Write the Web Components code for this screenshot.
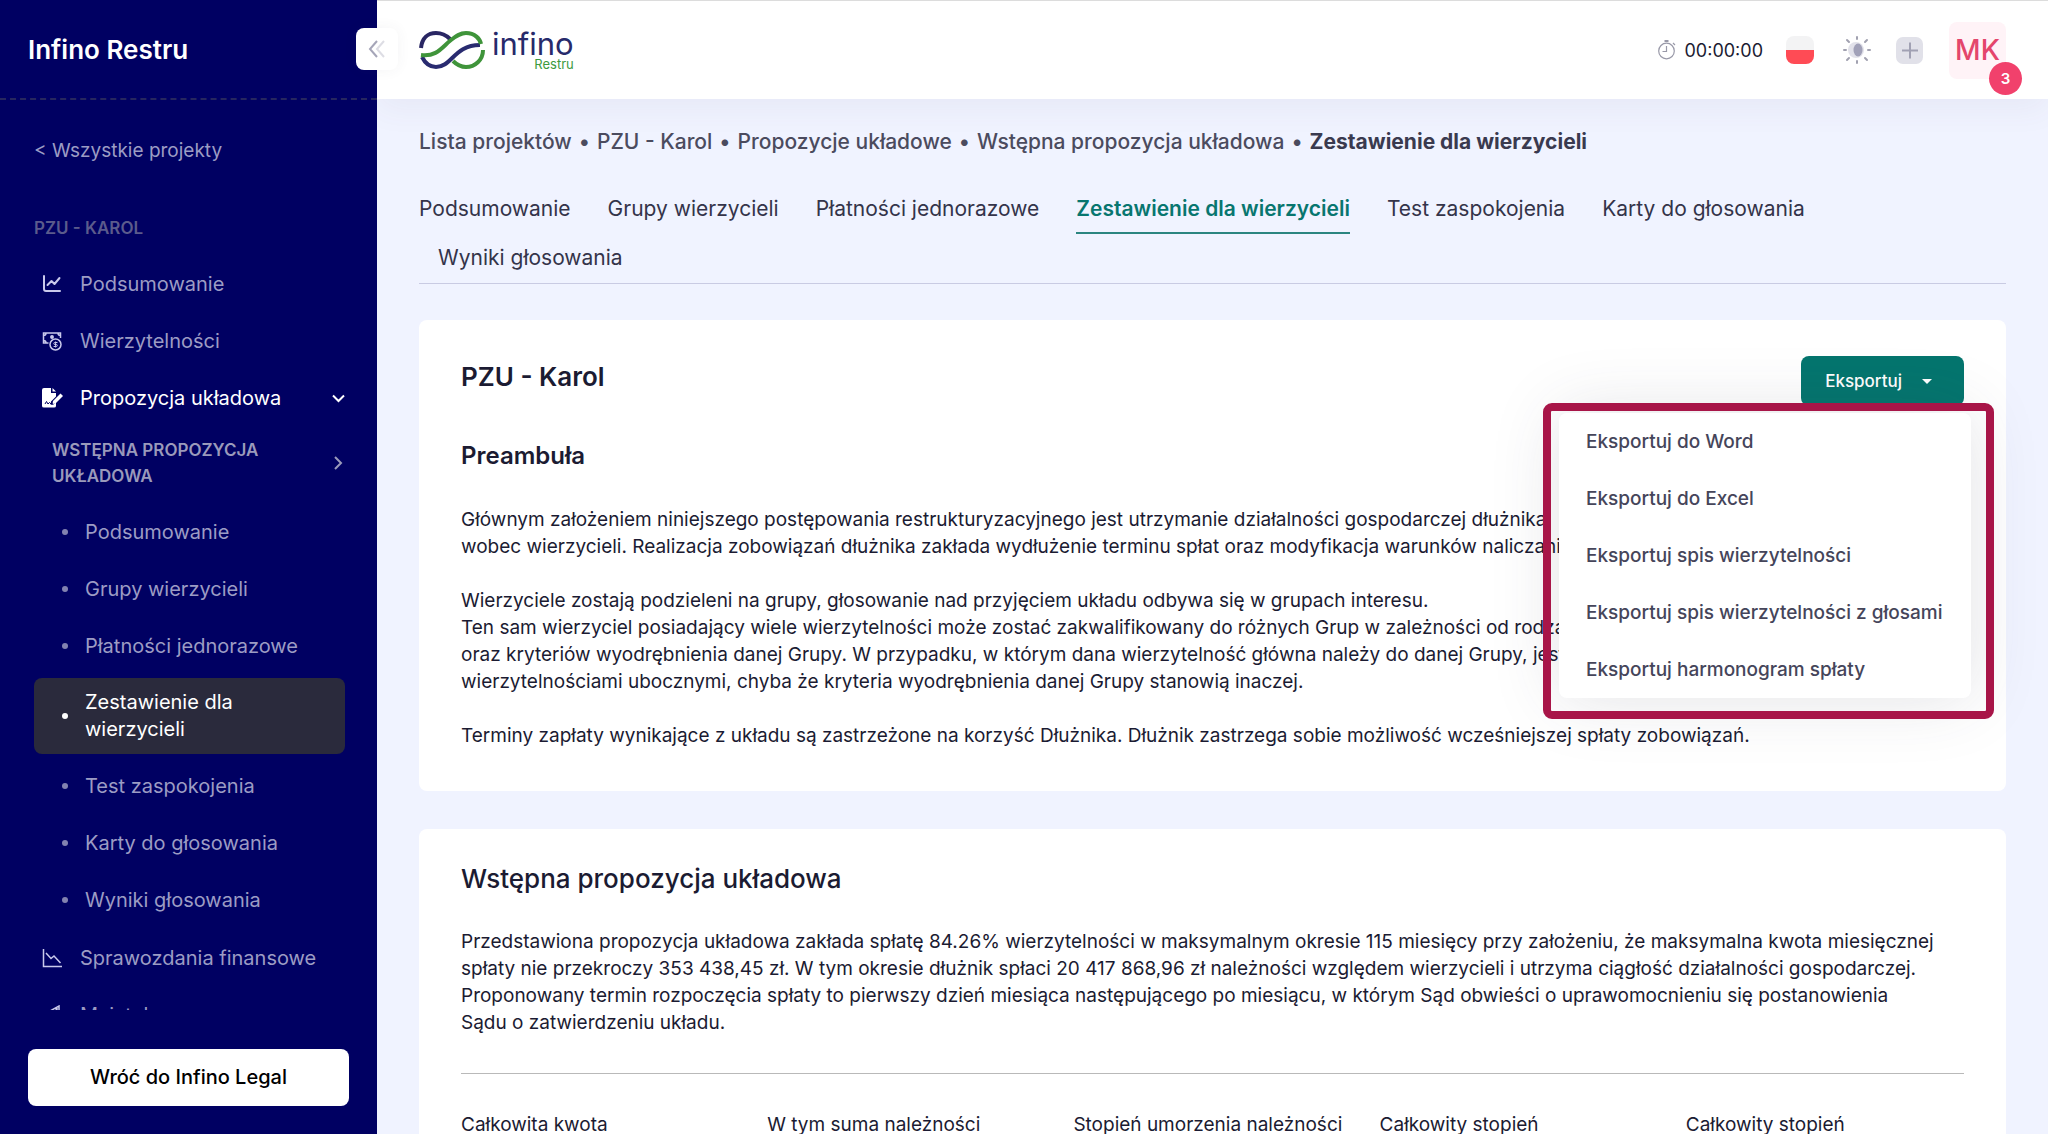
<!DOCTYPE html>
<html lang="pl">
<head>
<meta charset="utf-8">
<title>Infino Restru</title>
<style>
  body {
    margin: 0;
    font-family: Inter, 'Noto Sans', sans-serif;
    font-size: 19px;
    line-height: 27px;
    color: #1b1b32;
    background: #f0f3ff;
  }
</style>
</head>
<body>
<restru-app></restru-app>

<template id="side-link">
  <style>
    :host { display: block; }
    a {
      display: flex;
      align-items: center;
      min-height: 50px;
      box-sizing: border-box;
      padding: 11px 0 11px 8px;
      border-radius: 8px;
      color: #9c9cc4;
      font-size: 20px;
      text-decoration: none;
    }
    .icon { width: 38px; display: flex; flex: none; color: #c9c9ec; }
    .label { flex: 1; }
    :host([open]) a, :host([open]) .icon { color: #fff; }
    :host([sub]) .icon { width: 43px; color: #8282b0; }
    :host([sub]) .icon::before {
      content: '';
      width: 6px;
      height: 6px;
      margin-left: 20px;
      border-radius: 50%;
      background: currentColor;
    }
    :host([active]) a { background: #2a2a3c; color: #fff; padding-right: 80px; }
    :host([active]) .icon { color: #fff; }
  </style>
  <a href="#"><span class="icon"><slot name="icon"></slot></span><span class="label"><slot></slot></span><slot name="arrow"></slot></a>
</template>

<template id="side-bar">
  <style>
    :host {
      display: flex;
      flex-direction: column;
      width: 377px;
      height: 100vh;
      flex: none;
      position: relative;
      background: #000062;
      color: #9c9cc4;
      z-index: 2;
    }
    header {
      display: flex;
      align-items: center;
      height: 100px;
      padding: 0 28px;
      border-bottom: 2px dashed #26265f;
      box-sizing: border-box;
    }
    h1 { margin: 0; font-size: 26px; font-weight: 600; color: #fff; }
    .toggle {
      position: absolute;
      left: 356px;
      top: 28px;
      width: 42px;
      height: 42px;
      padding: 0;
      border: 0;
      border-radius: 8px;
      background: #fff;
      box-shadow: 0 0 14px rgba(60, 60, 90, .06);
      display: grid;
      place-items: center;
    }
    nav { flex: 1; min-height: 0; overflow: hidden; padding: 37px 32px 0 34px; margin-bottom: 39px; }
    .back { display: block; color: #9c9cc4; text-decoration: none; }
    h2 { margin: 51px 0 17px; font-size: 17px; font-weight: 600; color: #5b5b8c; text-transform: uppercase; }
    .links { display: flex; flex-direction: column; gap: 7px; }
    .links + .links { margin-top: 8px; }
    .group {
      display: flex;
      align-items: center;
      justify-content: space-between;
      padding: 14px 0 18px 18px;
      font-size: 17px;
      line-height: 26px;
      font-weight: 600;
      color: #9a9abb;
      text-transform: uppercase;
    }
    .group span { width: 240px; }
    .home { padding: 0 28px 28px; }
    .home button {
      width: 100%;
      height: 57px;
      border: 0;
      border-radius: 8px;
      background: #fff;
      color: #000;
      font: 500 20px/27px Inter, sans-serif;
    }
  </style>
  <header>
    <h1>Infino Restru</h1>
    <button class="toggle" aria-label="Zwiń menu">
      <svg width="18" height="20" viewBox="0 0 18 20" fill="none" stroke-width="2"><path d="M9 2 2 10l7 8" stroke="#a5a5b8"/><path d="M16 2 9 10l7 8" stroke="#dddde4"/></svg>
    </button>
  </header>
  <nav>
    <a class="back" href="#">&lt; Wszystkie projekty</a>
    <h2>PZU - Karol</h2>
    <div class="links">
      <side-link><svg slot="icon" width="20" height="20" viewBox="0 0 20 20" fill="none" stroke="currentColor" stroke-width="2" stroke-linecap="round" stroke-linejoin="round"><path d="M2 2v13q0 2 2 2h14M5.500 11l4-4 3 3 5-6"/></svg>Podsumowanie</side-link>
      <side-link><svg slot="icon" width="20" height="20" viewBox="0 0 20 20" fill="none" stroke="currentColor" stroke-width="1.500"><path d="M6.500 12H1.500V2h17v5M1.500 4.500Q4 4.500 4 2M16 2q0 2.500 2.500 2.500M1.500 9.500Q4 9.500 4 12"/><circle cx="13.500" cy="13.500" r="5.500"/><circle cx="10" cy="6" r="1.200" fill="currentColor"/><path d="M15.500 11.500h-2.700q-1 0-1 1t1 1h1.500q1 0 1 1t-1 1h-2.700M13.600 10.500v6" stroke-width="1"/></svg>Wierzytelności</side-link>
      <side-link open><svg slot="icon" width="22" height="20" viewBox="0 0 22 20" fill="currentColor"><path d="M2 0h7v5h5v3.500l-5 5-.5 3h3l2.500-2v3.500q0 1.500-2 1.500H2q-2 0-2-1.500V2q0-2 2-2z"/><path d="M10.500 0v3.500H14z"/><path d="m11 13 7.500-7.500 2.500 2.500-7.500 7.500-3 .5z"/><path d="m3 16 1.500-2.500L6 16l1.500-1.500L9 16h2" fill="none" stroke="#000062"/></svg>Propozycja układowa<svg slot="arrow" width="13" height="9" viewBox="0 0 13 9" fill="none" stroke="#fff" stroke-width="2"><path d="m1 1.500 5.500 5.500L12 1.500"/></svg></side-link>
    </div>
    <div class="group"><span>Wstępna propozycja układowa</span><svg width="13" height="14" viewBox="0 0 13 14" fill="none" stroke="currentColor" stroke-width="2"><path d="m3 1 6 6-6 6"/></svg></div>
    <div class="links">
      <side-link sub>Podsumowanie</side-link>
      <side-link sub>Grupy wierzycieli</side-link>
      <side-link sub>Płatności jednorazowe</side-link>
      <side-link sub active>Zestawienie dla wierzycieli</side-link>
      <side-link sub>Test zaspokojenia</side-link>
      <side-link sub>Karty do głosowania</side-link>
      <side-link sub>Wyniki głosowania</side-link>
    </div>
    <div class="links">
      <side-link><svg slot="icon" width="20" height="20" viewBox="0 0 20 20" fill="none" stroke="currentColor" stroke-width="1.500"><path d="M1.500 1v17.500H20M4 5l5 5.500L12 8l6.500 7"/></svg>Sprawozdania finansowe</side-link>
      <side-link><svg slot="icon" width="20" height="20" viewBox="0 0 20 20" fill="none" stroke="currentColor" stroke-width="1.500"><path d="M8 6l9-5v17M11 8l4-4v8z"/></svg>Majątek</side-link>
    </div>
  </nav>
  <div class="home"><button>Wróć do Infino Legal</button></div>
</template>

<template id="top-bar">
  <style>
    :host {
      display: flex;
      align-items: center;
      justify-content: space-between;
      height: 99px;
      box-sizing: border-box;
      padding: 0 42px;
      border-top: 1px solid #dcdcdc;
      background: #fff;
      box-shadow: 0 10px 30px rgba(82, 63, 105, .06);
    }
    .logo { display: flex; align-items: center; gap: 7px; }
    .name { display: grid; justify-items: end; color: #272a6b; font-size: 31px; line-height: 28px; }
    .name small { font-size: 13px; line-height: 12px; color: #3c9a3e; }
    .tools { display: flex; align-items: center; font-size: 18px; }
    .timer { display: flex; align-items: center; gap: 8px; margin-right: 23px; }
    .icon { display: flex; padding: 0; border: 0; background: none; }
    .flag { width: 28px; height: 28px; border-radius: 8px; background: linear-gradient(#f3f3f4 50%, #ff4b55 50%); margin-right: 29px; }
    .theme { margin-right: 25px; }
    .add { margin-right: 25px; }
    .user {
      position: relative;
      width: 57px;
      height: 57px;
      padding: 0;
      border: 0;
      border-radius: 8px;
      background: #fff3f7;
      color: #e4466c;
      font: 500 28px/57px Inter, sans-serif;
    }
    .badge {
      position: absolute;
      right: -16px;
      bottom: -16px;
      width: 33px;
      border-radius: 50%;
      background: #f1416c;
      color: #fff;
      font-size: 15px;
      font-weight: 600;
      line-height: 33px;
    }
  </style>
  <div class="logo">
    <svg width="66" height="38" viewBox="0 0 66 38" fill="none" stroke-width="4">
      <path d="M2 17C3 7 9 2 17 2c6 0 10 2 14 6" stroke="#292663"/>
      <path d="M3 26c3 6 8 10 14 10 16 0 18-22 44-22" stroke="#292b70"/>
      <path d="M2 24c16 2 21-8 30-15 5-4 9-7 15-7 9 0 14 6 15 11" stroke="#3f943a"/>
      <path d="M64 19c0 10-8 17-17 17-5 0-9-2-13-6" stroke="#3f943a"/>
    </svg>
    <div class="name">infino<small>Restru</small></div>
  </div>
  <div class="tools">
    <div class="timer">
      <svg width="18" height="20" viewBox="0 0 18 20" fill="none" stroke="#9999a8" stroke-width="1.200"><circle cx="8.500" cy="11" r="7.800"/><path d="M8.500 6v5.500H4.500M15 3l2 2"/><path d="M6.500 1h4" stroke-width="2"/></svg>
      <span>00:00:00</span>
    </div>
    <button class="icon flag" aria-label="Język"></button>
    <button class="icon theme" aria-label="Motyw">
      <svg width="28" height="28" viewBox="0 0 28 28"><circle cx="13" cy="14" r="8" fill="#e2e2ea"/><ellipse cx="15" cy="14" rx="4.500" ry="6.500" fill="#a1a1b8"/><path d="M14 1v2M14 25v2M1 14h2M25 14h2M4 4l2 2M22 22l2 2M4 24l2-2M22 6l2-2" stroke="#a1a1b0" stroke-width="2" stroke-linecap="round"/></svg>
    </button>
    <button class="icon add" aria-label="Dodaj">
      <svg width="28" height="28" viewBox="0 0 28 28"><rect width="27" height="27" y="1" rx="7" fill="#e1e1e9"/><path d="M6 14.500h16M14 6.500v16" stroke="#a1a1b3" stroke-width="2"/></svg>
    </button>
    <button class="user">MK<span class="badge">3</span></button>
  </div>
</template>

<template id="crumb-trail">
  <style>
    :host { display: block; font-size: 21px; font-weight: 500; color: #4b4b5e; }
    nav { display: flex; }
    a { color: inherit; text-decoration: none; white-space: nowrap; }
    a:not(:last-child)::after { content: '•'; margin: 0 7px; }
    a:last-child { font-weight: 700; color: #3a3a4f; }
  </style>
  <nav></nav>
</template>

<template id="tab-list">
  <style>
    :host { display: block; border-bottom: 1px solid #c9cbe3; }
    nav { display: flex; flex-wrap: wrap; }
    a {
      padding: 10px 0;
      margin-right: 37px;
      border-bottom: 2px solid transparent;
      color: #34344a;
      text-decoration: none;
      font-size: 21px;
    }
    a.active { color: #08766f; border-color: #2b8580; font-weight: 600; }
    a:last-child { margin-left: 19px; }
  </style>
  <nav></nav>
</template>

<template id="info-card">
  <style>
    :host { display: block; padding: 36px 42px 42px; border-radius: 8px; background: #fff; }
  </style>
  <slot></slot>
</template>

<template id="export-menu">
  <style>
    :host { display: block; position: relative; }
    .trigger {
      display: flex;
      align-items: center;
      gap: 20px;
      height: 50px;
      padding: 0 32px 0 24px;
      border: 0;
      border-radius: 8px;
      background: #04756e;
      color: #fff;
      font: 500 17px/27px Inter, sans-serif;
    }
    .trigger::after {
      content: '';
      border: 5px solid transparent;
      border-top-color: #fff;
      border-bottom: 0;
    }
    .frame {
      position: absolute;
      top: 47px;
      right: -30px;
      width: 451px;
      height: 316px;
      box-sizing: border-box;
      border: 8px solid #a81548;
      border-radius: 9px;
      z-index: 2;
      pointer-events: none;
    }
    .menu {
      position: absolute;
      top: 57px;
      right: -7px;
      width: 412px;
      box-sizing: border-box;
      padding: 0 27px;
      border-radius: 8px;
      background: #fff;
      box-shadow: 0 0 69px rgba(60, 60, 80, .15);
      z-index: 1;
    }
    .menu a {
      display: block;
      line-height: 57px;
      font-weight: 500;
      color: #45455a;
      text-decoration: none;
      white-space: nowrap;
    }
  </style>
  <button class="trigger" aria-haspopup="true">Eksportuj</button>
  <div class="menu">
    <a href="#">Eksportuj do Word</a>
    <a href="#">Eksportuj do Excel</a>
    <a href="#">Eksportuj spis wierzytelności</a>
    <a href="#">Eksportuj spis wierzytelności z głosami</a>
    <a href="#">Eksportuj harmonogram spłaty</a>
  </div>
  <div class="frame"></div>
</template>

<template id="restru-app">
  <style>
    :host { display: flex; height: 100vh; overflow: hidden; }
    .page { flex: 1; min-width: 0; }
    main { padding: 29px 42px 0; }
    tab-list { margin: 30px 0 36px; }
    .head { display: flex; justify-content: space-between; align-items: flex-start; height: 86px; }
    h2, h3 { margin: 0; line-height: 42px; font-size: 26px; font-weight: 600; }
    h3 { font-size: 24px; line-height: 28px; margin: 0 0 36px; }
    .plain { font-weight: 500; line-height: 28px; margin-bottom: 35px; }
    p { margin: 0 0 27px; white-space: nowrap; }
    p:last-of-type { margin-bottom: 0; }
    info-card + info-card { margin-top: 38px; }
    hr { margin: 37px 0; border: 0; border-top: 1px solid #b9b9b9; }
    .stats { display: grid; grid-template-columns: repeat(5, 1fr); margin-right: -28px; }
  </style>
  <side-bar></side-bar>
  <div class="page">
    <top-bar></top-bar>
    <main>
      <crumb-trail items="Lista projektów|PZU - Karol|Propozycje układowe|Wstępna propozycja układowa|Zestawienie dla wierzycieli"></crumb-trail>
      <tab-list active="3" items="Podsumowanie|Grupy wierzycieli|Płatności jednorazowe|Zestawienie dla wierzycieli|Test zaspokojenia|Karty do głosowania|Wyniki głosowania"></tab-list>
      <info-card>
        <div class="head"><h2>PZU - Karol</h2><export-menu></export-menu></div>
        <h3>Preambuła</h3>
        <p>Głównym założeniem niniejszego postępowania restrukturyzacyjnego jest utrzymanie działalności gospodarczej dłużnika<br>wobec wierzycieli. Realizacja zobowiązań dłużnika zakłada wydłużenie terminu spłat oraz modyfikacja warunków naliczania</p>
        <p>Wierzyciele zostają podzieleni na grupy, głosowanie nad przyjęciem układu odbywa się w grupach interesu.<br>Ten sam wierzyciel posiadający wiele wierzytelności może zostać zakwalifikowany do różnych Grup w zależności od rodzaju<br>oraz kryteriów wyodrębnienia danej Grupy. W przypadku, w którym dana wierzytelność główna należy do danej Grupy, jest<br>wierzytelnościami ubocznymi, chyba że kryteria wyodrębnienia danej Grupy stanowią inaczej.</p>
        <p>Terminy zapłaty wynikające z układu są zastrzeżone na korzyść Dłużnika. Dłużnik zastrzega sobie możliwość wcześniejszej spłaty zobowiązań.</p>
      </info-card>
      <info-card>
        <h2 class="plain">Wstępna propozycja układowa</h2>
        <p>Przedstawiona propozycja układowa zakłada spłatę 84.26% wierzytelności w maksymalnym okresie 115 miesięcy przy założeniu, że maksymalna kwota miesięcznej<br>spłaty nie przekroczy 353 438,45 zł. W tym okresie dłużnik spłaci 20 417 868,96 zł należności względem wierzycieli i utrzyma ciągłość działalności gospodarczej.<br>Proponowany termin rozpoczęcia spłaty to pierwszy dzień miesiąca następującego po miesiącu, w którym Sąd obwieści o uprawomocnieniu się postanowienia<br>Sądu o zatwierdzeniu układu.</p>
        <hr>
        <div class="stats">
          <span>Całkowita kwota</span><span>W tym suma należności</span><span>Stopień umorzenia należności</span><span>Całkowity stopień</span><span>Całkowity stopień</span>
        </div>
      </info-card>
    </main>
  </div>
</template>

<script>
class BaseElement extends HTMLElement {
    constructor() {
        super();
        const template = document.getElementById(this.localName);
        this.attachShadow({ mode: 'open' });
        this.shadowRoot.appendChild(template.content.cloneNode(true));
    }
}

// Renders the "items" attribute as a row of links
class LinkRow extends BaseElement {
    connectedCallback() {
        const nav = this.shadowRoot.querySelector('nav');
        const active = Number(this.getAttribute('active') || -1);

        nav.innerHTML = '';
        this.getAttribute('items').split('|').forEach((text, i) => {
            const link = document.createElement('a');
            link.href = '#';
            link.textContent = text;
            link.classList.toggle('active', i === active);
            nav.appendChild(link);
        });
    }
}

class ExportMenu extends BaseElement {
    connectedCallback() {
        const menu = this.shadowRoot.querySelector('.menu');
        this.shadowRoot.querySelector('.trigger').addEventListener('click', () => {
            menu.hidden = !menu.hidden;
        });
    }
}

window.customElements.define('side-link', class extends BaseElement {});
window.customElements.define('side-bar', class extends BaseElement {});
window.customElements.define('top-bar', class extends BaseElement {});
window.customElements.define('crumb-trail', class extends LinkRow {});
window.customElements.define('tab-list', class extends LinkRow {});
window.customElements.define('info-card', class extends BaseElement {});
window.customElements.define('export-menu', ExportMenu);
window.customElements.define('restru-app', class extends BaseElement {});
</script>
</body>
</html>
